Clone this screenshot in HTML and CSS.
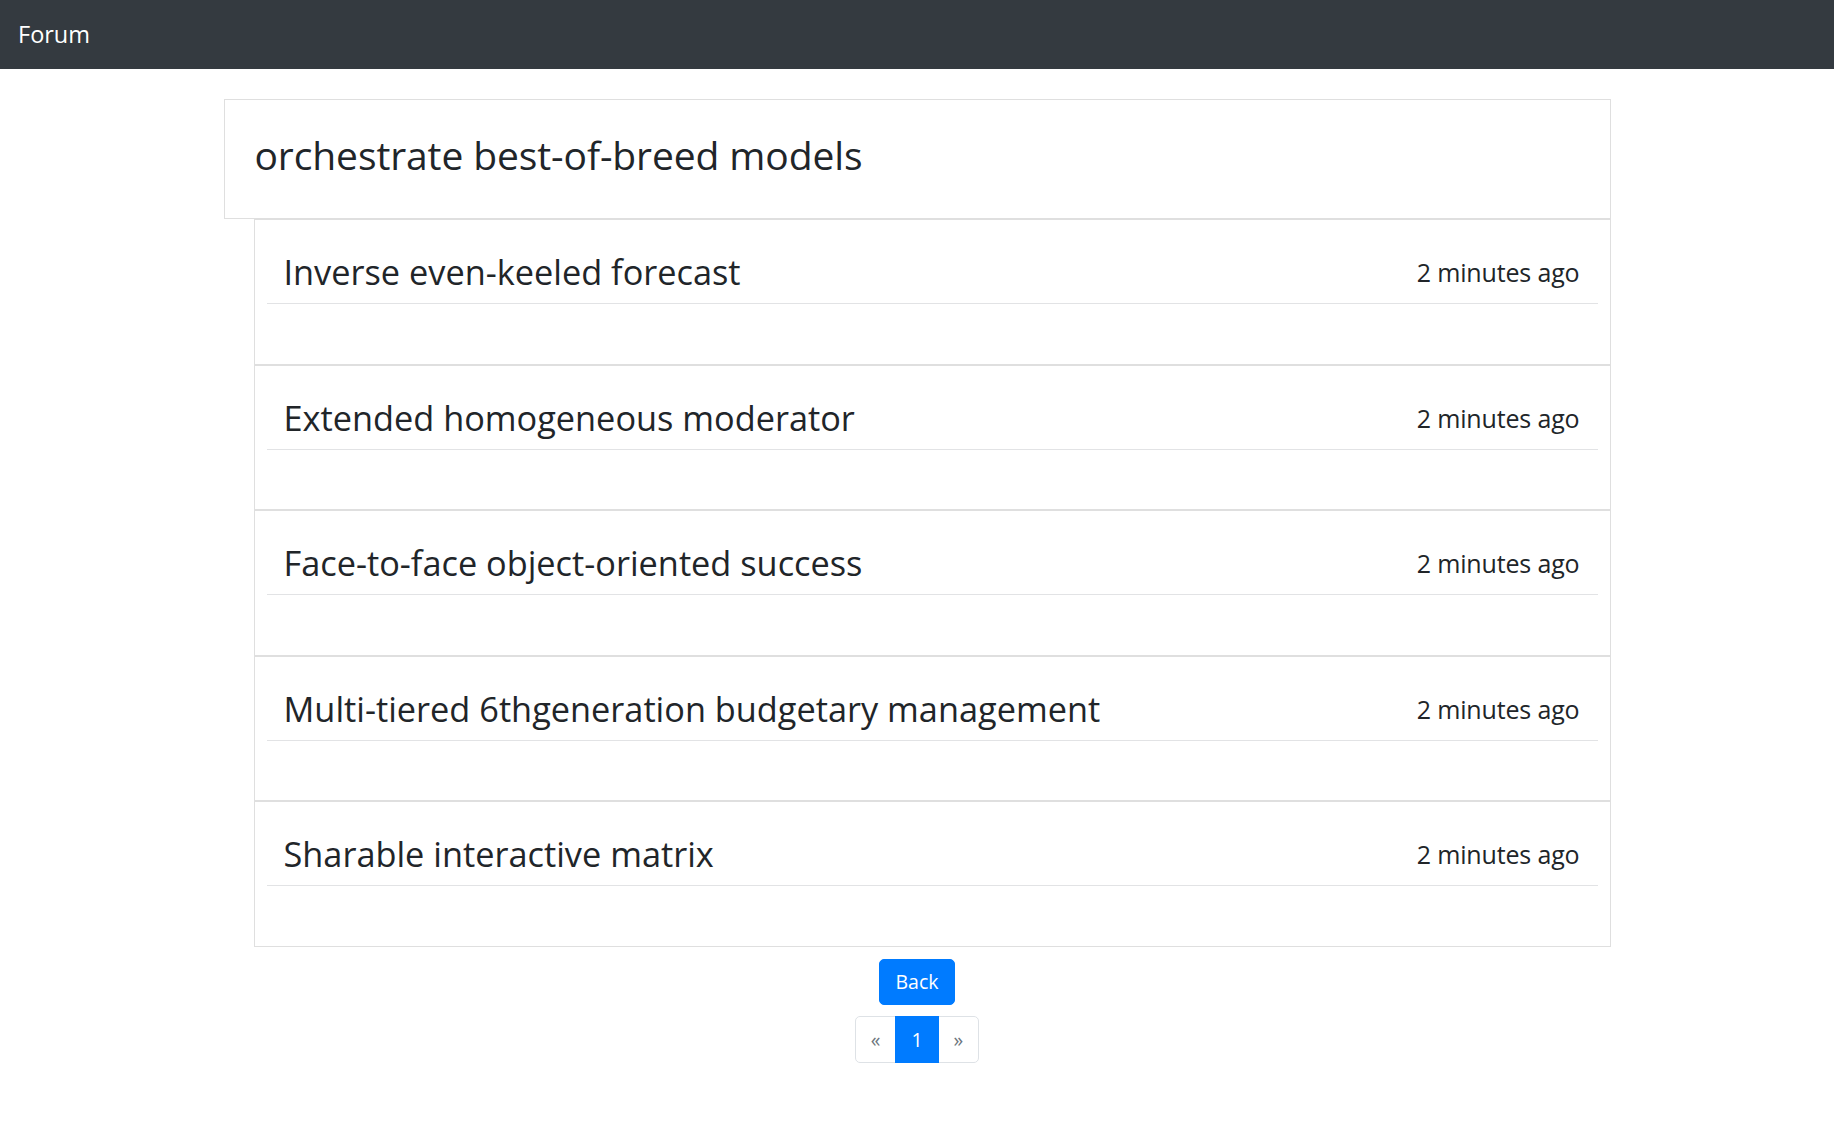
FILE: index.html
```html
<!DOCTYPE html>
<html lang="en">
<head>
<meta charset="utf-8">
<title>Forum</title>
<link rel="stylesheet" href="styles.css">
</head>
<body>
<nav class="navbar">
  <a class="brand" href="#">Forum</a>
</nav>
<main class="container">
  <section class="topic">
    <h2 class="topic-title">orchestrate best-of-breed models</h2>
  </section>
  <div class="posts">
    <article class="post">
      <div class="post-head"><h3 class="post-title">Inverse even-keeled forecast</h3><span class="post-time">2 minutes ago</span></div>
      <hr class="post-rule">
    </article>
    <article class="post">
      <div class="post-head"><h3 class="post-title">Extended homogeneous moderator</h3><span class="post-time">2 minutes ago</span></div>
      <hr class="post-rule">
    </article>
    <article class="post">
      <div class="post-head"><h3 class="post-title">Face-to-face object-oriented success</h3><span class="post-time">2 minutes ago</span></div>
      <hr class="post-rule">
    </article>
    <article class="post">
      <div class="post-head"><h3 class="post-title">Multi-tiered 6thgeneration budgetary management</h3><span class="post-time">2 minutes ago</span></div>
      <hr class="post-rule">
    </article>
    <article class="post">
      <div class="post-head"><h3 class="post-title">Sharable interactive matrix</h3><span class="post-time">2 minutes ago</span></div>
      <hr class="post-rule">
    </article>
  </div>
  <div class="actions">
    <a class="btn-back" href="#">Back</a>
    <ul class="pagination">
      <li class="page-item disabled"><span class="page-link">&laquo;</span></li>
      <li class="page-item active"><span class="page-link">1</span></li>
      <li class="page-item disabled"><span class="page-link">&raquo;</span></li>
    </ul>
  </div>
</main>
</body>
</html>
```
FILE: styles.css
```css
* { box-sizing: border-box; }
html, body { margin: 0; padding: 0; }
body {
  font-family: "Open Sans", "Noto Sans", sans-serif;
  font-size: 19.5px;
  color: #212529;
  background: #fff;
}
.navbar {
  height: 69px;
  background: #343a40;
  display: flex;
  align-items: center;
  padding: 0 18px;
}
.brand {
  color: #fff;
  text-decoration: none;
  font-size: 23.5px;
  line-height: 32px;
  margin-top: -1px;
}
.container {
  width: 1387px;
  margin: 30px auto 0;
}
.topic {
  border: 1px solid #dfdfdf;
  padding: 31px 30px 29px 30px;
}
.topic-title {
  margin: 0 0 10px;
  font-size: 39px;
  line-height: 48px;
  font-weight: 400;
  letter-spacing: -0.1px;
}
.posts {
  margin-left: 30px;
}
.post {
  border: 1px solid #dfdfdf;
  padding: 31px 12px 29.5px;
}
.post-head {
  display: flex;
  justify-content: space-between;
  align-items: center;
  padding: 0 18px 0 17px;
}
.post-title {
  margin: 0;
  font-size: 34.3px;
  line-height: 42px;
  font-weight: 400;
}
.post-time {
  font-size: 25px;
  line-height: 30px;
  letter-spacing: -0.15px;
}
.post-rule {
  margin: 10px 0 30px;
  border: 0;
  border-top: 1px solid #e2e3e5;
  height: 0;
}
.actions {
  display: flex;
  flex-direction: column;
  align-items: center;
}
.btn-back {
  margin-top: 12px;
  display: inline-block;
  background: #007bff;
  border: 1px solid #007bff;
  color: #fff;
  text-decoration: none;
  border-radius: 5px;
  padding: 7px 15px;
  line-height: 30px;
  font-size: 19.5px;
}
.pagination {
  list-style: none;
  margin: 11px 0 0;
  padding: 0;
  display: flex;
}
.page-link {
  display: block;
  padding: 10px 15px;
  line-height: 25px;
  border: 1px solid #dee2e6;
  color: #6c757d;
  background: #fff;
  margin-left: -1px;
}
.page-item:first-child .page-link {
  margin-left: 0;
  border-radius: 5px 0 0 5px;
}
.page-item:last-child .page-link {
  border-radius: 0 5px 5px 0;
}
.page-item.active .page-link {
  background: #007bff;
  border-color: #007bff;
  color: #fff;
  position: relative;
  z-index: 1;
}
```
